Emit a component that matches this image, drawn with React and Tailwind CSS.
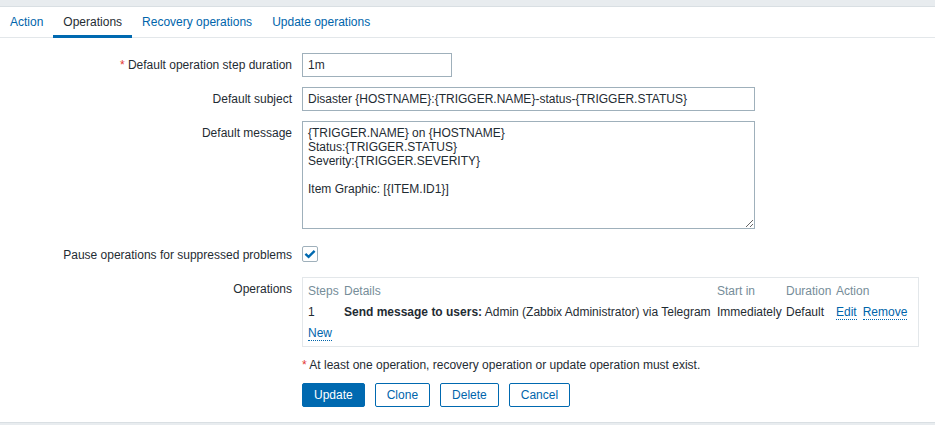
import React from "react";

const tabs = ["Action", "Operations", "Recovery operations", "Update operations"];

const message = `{TRIGGER.NAME} on {HOSTNAME}
Status:{TRIGGER.STATUS}
Severity:{TRIGGER.SEVERITY}

Item Graphic: [{ITEM.ID1}]`;

const field =
  "block border border-[#9fb0bb] bg-white px-[5px] text-[#1f2c33] outline-none focus:border-[#0275b8]";

const dotted = "border-b border-dotted border-[#0065ab] text-[#0065ab] leading-[14px] inline-block";

function Row({ label, htmlFor, required, children }) {
  const Tag = htmlFor ? "label" : "div";
  return (
    <div className="flex items-start gap-[10px]">
      <Tag htmlFor={htmlFor} className="w-[292px] shrink-0 text-right leading-6">
        {required && <span className="text-[#e33734]">* </span>}
        {label}
      </Tag>
      <div className="min-w-0 grow">{children}</div>
    </div>
  );
}

function Button({ primary, children }) {
  return (
    <button
      type="button"
      className={
        primary
          ? "h-6 rounded-xs border border-[#0069b0] bg-[#0069b0] px-[11px] text-white"
          : "h-6 rounded-xs border border-[#0069b0] bg-white px-[11px] text-[#0065ab]"
      }
    >
      {children}
    </button>
  );
}

export default function App() {
  return (
    <div className="min-h-screen bg-[#e8ecef] pt-[6px] font-['Liberation_Sans',Arial,sans-serif] text-[12px] text-[#1f2c33]">
      <main className="border-y border-[#d9dfe3] bg-white pb-[15px]">
        <nav className="flex border-b border-[#e3e7ea]">
          {tabs.map((tab) => (
            <a
              key={tab}
              href="#"
              className={
                tab === "Operations"
                  ? "-mb-px border-b-3 border-[#0069b0] px-[10px] pt-[2px] leading-[26px] text-[#1f2c33]"
                  : "-mb-px border-b-3 border-transparent px-[10px] pt-[2px] leading-[26px] text-[#0065ab]"
              }
            >
              {tab}
            </a>
          ))}
        </nav>
        <form className="flex flex-col gap-[10px] pt-[15px] pr-4">
          <Row label="Default operation step duration" htmlFor="duration" required>
            <input id="duration" type="text" defaultValue="1m" className={`${field} h-6 w-[150px]`} />
          </Row>
          <Row label="Default subject" htmlFor="subject">
            <input
              id="subject"
              type="text"
              defaultValue="Disaster {HOSTNAME}:{TRIGGER.NAME}-status-{TRIGGER.STATUS}"
              className={`${field} h-6 w-[453px] max-w-full`}
            />
          </Row>
          <Row label="Default message" htmlFor="message">
            <textarea
              id="message"
              defaultValue={message}
              className={`${field} mb-1 h-[108px] w-[453px] max-w-full resize py-1 leading-[14px]`}
            />
          </Row>
          <Row label="Pause operations for suppressed problems" htmlFor="pause">
            <span className="flex h-6 items-center pb-[2px]">
              <span className="grid size-4">
                <input
                  id="pause"
                  type="checkbox"
                  defaultChecked
                  className="peer col-start-1 row-start-1 size-4 appearance-none rounded-xs border border-[#9fb0bb] bg-white"
                />
                <svg
                  viewBox="0 0 16 16"
                  className="pointer-events-none invisible col-start-1 row-start-1 size-4 peer-checked:visible"
                  aria-hidden="true"
                >
                  <path d="M3.4 7.8 L6.6 10.8 L12.6 4.9" fill="none" stroke="#0069b0" strokeWidth="2.4" />
                </svg>
              </span>
            </span>
          </Row>
          <Row label="Operations">
            <div className="border border-[#e3e7ea] pt-[3px] pb-[2px] pl-[5px]">
              <table className="w-full table-fixed text-left leading-[21px] whitespace-nowrap">
                <colgroup>
                  <col className="w-[36px]" />
                  <col className="w-[373px]" />
                  <col className="w-[69px]" />
                  <col className="w-[50px]" />
                  <col />
                </colgroup>
                <thead>
                  <tr className="text-[#768d99]">
                    <th className="p-0 font-normal">Steps</th>
                    <th className="p-0 font-normal">Details</th>
                    <th className="p-0 font-normal">Start in</th>
                    <th className="p-0 font-normal">Duration</th>
                    <th className="p-0 font-normal">Action</th>
                  </tr>
                </thead>
                <tbody>
                  <tr>
                    <td className="p-0">1</td>
                    <td className="p-0">
                      <b>Send message to users:</b> Admin (Zabbix Administrator) via Telegram
                    </td>
                    <td className="p-0">Immediately</td>
                    <td className="p-0">Default</td>
                    <td className="p-0">
                      <span className="flex h-[21px] items-center gap-[6px]">
                        <button type="button" className={dotted}>Edit</button>
                        <button type="button" className={dotted}>Remove</button>
                      </span>
                    </td>
                  </tr>
                  <tr>
                    <td colSpan={5} className="p-0">
                      <span className="flex h-[21px] items-center">
                        <button type="button" className={dotted}>New</button>
                      </span>
                    </td>
                  </tr>
                </tbody>
              </table>
            </div>
            <p className="my-[6px] leading-6">
              <span className="text-[#e33734]">* </span>
              At least one operation, recovery operation or update operation must exist.
            </p>
            <div className="flex gap-[10px]">
              <Button primary>Update</Button>
              <Button>Clone</Button>
              <Button>Delete</Button>
              <Button>Cancel</Button>
            </div>
          </Row>
        </form>
      </main>
    </div>
  );
}
